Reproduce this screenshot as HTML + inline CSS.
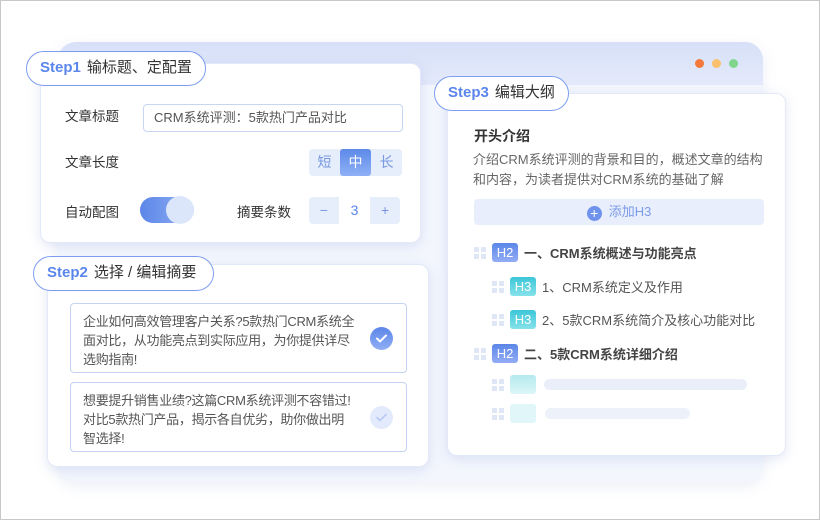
<!DOCTYPE html>
<html><head><meta charset="utf-8"><style>
*{margin:0;padding:0;box-sizing:border-box}
body{width:820px;height:520px;background:#fff;position:relative;overflow:hidden;font-family:"Liberation Sans","Noto Sans CJK SC",sans-serif;color:#333}
.frame{position:absolute;left:0;top:0;width:820px;height:520px;border:1px solid #c8c8c8}
.win{position:absolute;left:58px;top:42px;width:705px;height:440px;border-radius:18px;background:#f3f6fd;box-shadow:0 4px 14px rgba(120,140,200,.15);overflow:hidden}
.win .hd{height:43px;background:linear-gradient(#d7e0f8,#e4eafb)}
.dot{position:absolute;top:17px;width:9px;height:9px;border-radius:50%}
.card{position:absolute;background:#fff;border-radius:10px;box-shadow:0 3px 12px rgba(110,130,200,.18);border:1px solid #e3e9f8}
.pill{position:absolute;background:#fff;border:1.5px solid #7e9df0;border-radius:18px;font-size:15px;color:#333;padding:0 0 0 13px;line-height:31px;white-space:nowrap}
.pill b{color:#5b86ec;font-weight:bold;margin-right:6px}
.lbl{position:absolute;font-size:13.5px;color:#333}
.seg{position:absolute;display:flex;background:#e6edfb;border-radius:4px;height:27px}
.seg span{width:31px;text-align:center;line-height:27px;font-size:14px;color:#7a98e0}
.seg .on{background:linear-gradient(#5d8ae8,#8fb0f6);color:#fff;border-radius:3px}
.sum{position:absolute;left:22px;width:337px;border:1px solid #c4d3f1;border-radius:4px;font-size:13px;line-height:19px;color:#555;padding:8px 12px;white-space:nowrap;letter-spacing:-0.3px}
.chk{position:absolute;right:13px;top:50%;margin-top:-11px;width:23px;height:23px;border-radius:50%}
.row{position:absolute;display:flex;align-items:center;font-size:13px;white-space:nowrap}
.grip{width:12px;height:12px;display:grid;grid-template-columns:5px 5px;gap:2px;margin-right:6px}
.grip i{background:#dfe6f5}
.tag{width:26px;height:19px;border-radius:3px;color:#fff;font-size:13px;font-weight:normal;text-align:center;line-height:19px;margin-right:6px}
.h2{background:linear-gradient(#5b86e8,#93adf5)}
.h3{background:linear-gradient(#3cc6d8,#86e2ea)}
</style></head><body>
<div class="win"><div class="hd"></div>
<div class="dot" style="left:637px;background:#f4793b"></div>
<div class="dot" style="left:654px;background:#fbc06b"></div>
<div class="dot" style="left:671px;background:#7fd68c"></div>
</div>

<div class="card" style="left:40px;top:63px;width:381px;height:180px">
<div class="lbl" style="left:24px;top:41px">文章标题</div>
<div style="position:absolute;left:102px;top:40px;width:260px;height:28px;border:1px solid #c6d5f2;border-radius:4px;font-size:13px;color:#555;line-height:26px;padding-left:10px">CRM系统评测：5款热门产品对比</div>
<div class="lbl" style="left:24px;top:87px">文章长度</div>
<div class="seg" style="left:268px;top:85px"><span>短</span><span class="on">中</span><span>长</span></div>
<div class="lbl" style="left:24px;top:137px">自动配图</div>
<div style="position:absolute;left:99px;top:133px;width:54px;height:26px;border-radius:13px;background:linear-gradient(90deg,#5b86e8,#93b0f5)"><div style="position:absolute;right:0;top:-1px;width:28px;height:28px;border-radius:50%;background:#dce6fb"></div></div>
<div class="lbl" style="left:196px;top:137px">摘要条数</div>
<div class="seg" style="left:268px;top:133px;width:91px"><span>−</span><span style="background:#fff;color:#5b86ec;width:33px">3</span><span>+</span></div>
</div>
<div class="pill" style="left:26px;top:51px;width:180px;height:35px"><b>Step1</b>输标题、定配置</div>

<div class="card" style="left:47px;top:264px;width:382px;height:203px">
<div class="sum" style="top:38px;height:70px">企业如何高效管理客户关系?5款热门CRM系统全<br>面对比，从功能亮点到实际应用，为你提供详尽<br>选购指南!
<div class="chk" style="background:linear-gradient(#5b86e8,#91aef5)"><svg width="23" height="23" viewBox="0 0 23 23"><path d="M7 11.5l3 3 6-6" stroke="#fff" stroke-width="2" fill="none" stroke-linecap="round" stroke-linejoin="round"/></svg></div></div>
<div class="sum" style="top:117px;height:70px">想要提升销售业绩?这篇CRM系统评测不容错过!<br>对比5款热门产品，揭示各自优劣，助你做出明<br>智选择!
<div class="chk" style="background:#e2eafc"><svg width="23" height="23" viewBox="0 0 23 23"><path d="M7 11.5l3 3 6-6" stroke="#b7c9f2" stroke-width="1.6" fill="none" stroke-linecap="round" stroke-linejoin="round"/></svg></div></div>
</div>
<div class="pill" style="left:33px;top:256px;width:181px;height:35px"><b>Step2</b>选择 / 编辑摘要</div>

<div class="card" style="left:447px;top:93px;width:339px;height:363px">
<div style="position:absolute;left:26px;top:32px;font-size:14px;font-weight:bold;color:#333">开头介绍</div>
<div style="position:absolute;left:25px;top:56px;width:295px;font-size:13px;line-height:20px;color:#666">介绍CRM系统评测的背景和目的，概述文章的结构和内容，为读者提供对CRM系统的基础了解</div>
<div style="position:absolute;left:26px;top:105px;width:290px;height:26px;background:#e8eefb;border-radius:4px;text-align:center;font-size:13px;color:#7b9ae8;line-height:26px"><span style="display:inline-block;width:15px;height:15px;border-radius:50%;background:#6f93ec;color:#fff;line-height:14px;font-size:14px;vertical-align:-2px;margin-right:7px">+</span>添加H3</div>
<div class="row" style="left:26px;top:149px;font-weight:bold;color:#444"><div class="grip"><i></i><i></i><i></i><i></i></div><div class="tag h2">H2</div>一、CRM系统概述与功能亮点</div>
<div class="row" style="left:44px;top:183px;color:#555"><div class="grip"><i></i><i></i><i></i><i></i></div><div class="tag h3">H3</div>1、CRM系统定义及作用</div>
<div class="row" style="left:44px;top:216px;color:#555"><div class="grip"><i></i><i></i><i></i><i></i></div><div class="tag h3">H3</div>2、5款CRM系统简介及核心功能对比</div>
<div class="row" style="left:26px;top:250px;font-weight:bold;color:#444"><div class="grip"><i></i><i></i><i></i><i></i></div><div class="tag h2">H2</div>二、5款CRM系统详细介绍</div>
<div class="row" style="left:44px;top:281px"><div class="grip"><i></i><i></i><i></i><i></i></div><div class="tag" style="background:linear-gradient(#b5eaee,#dcf6f8)"></div><div style="width:203px;height:11px;border-radius:6px;background:#e9eef9;margin-left:2px"></div></div>
<div class="row" style="left:44px;top:310px"><div class="grip"><i></i><i></i><i></i><i></i></div><div class="tag" style="background:#e0f6f8"></div><div style="width:145px;height:11px;border-radius:6px;background:#edf1fa;margin-left:3px"></div></div>
</div>
<div class="pill" style="left:434px;top:76px;width:135px;height:35px"><b>Step3</b>编辑大纲</div>
<div class="frame"></div>
</body></html>
